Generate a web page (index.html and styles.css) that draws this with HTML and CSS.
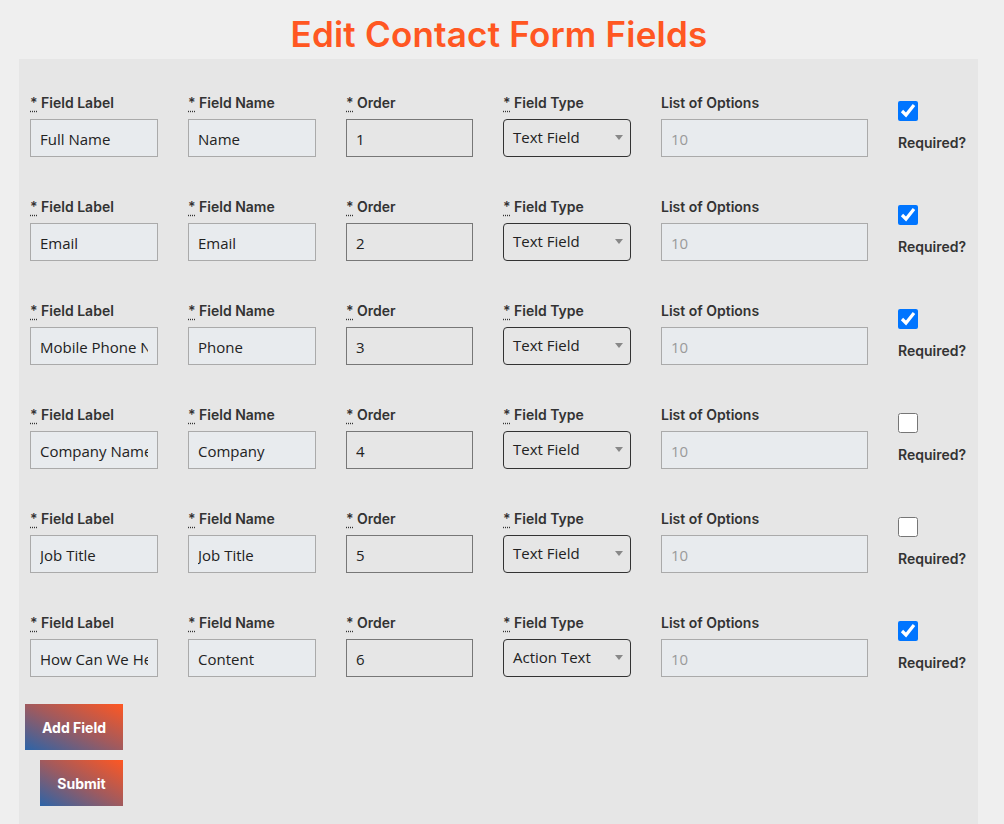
FILE: index.html
```html
<!DOCTYPE html>
<html>
<head>
  <meta charset="utf-8">
  <title>Edit Contact Form Fields</title>
  <link rel="stylesheet" href="styles.css">
</head>
<body>
  <h1>Edit Contact Form Fields</h1>

  <form class="fields" onSubmit="return false">
    <div class="row">
      <div class="col"><label><abbr title="required">*</abbr> Field Label</label><input class="txt" type="text" value="Full Name"></div>
      <div class="col"><label><abbr title="required">*</abbr> Field Name</label><input class="txt" type="text" value="Name"></div>
      <div class="col order"><label><abbr title="required">*</abbr> Order</label><input class="txt num" type="text" value="1"></div>
      <div class="col"><label><abbr title="required">*</abbr> Field Type</label><div class="select">Text Field</div></div>
      <div class="col wide"><label>List of Options</label><input class="txt" type="text" placeholder="10" disabled></div>
      <div class="req"><input type="checkbox" checked><label>Required?</label></div>
    </div>

    <div class="row">
      <div class="col"><label><abbr title="required">*</abbr> Field Label</label><input class="txt" type="text" value="Email"></div>
      <div class="col"><label><abbr title="required">*</abbr> Field Name</label><input class="txt" type="text" value="Email"></div>
      <div class="col order"><label><abbr title="required">*</abbr> Order</label><input class="txt num" type="text" value="2"></div>
      <div class="col"><label><abbr title="required">*</abbr> Field Type</label><div class="select">Text Field</div></div>
      <div class="col wide"><label>List of Options</label><input class="txt" type="text" placeholder="10" disabled></div>
      <div class="req"><input type="checkbox" checked><label>Required?</label></div>
    </div>

    <div class="row">
      <div class="col"><label><abbr title="required">*</abbr> Field Label</label><input class="txt" type="text" value="Mobile Phone Number"></div>
      <div class="col"><label><abbr title="required">*</abbr> Field Name</label><input class="txt" type="text" value="Phone"></div>
      <div class="col order"><label><abbr title="required">*</abbr> Order</label><input class="txt num" type="text" value="3"></div>
      <div class="col"><label><abbr title="required">*</abbr> Field Type</label><div class="select">Text Field</div></div>
      <div class="col wide"><label>List of Options</label><input class="txt" type="text" placeholder="10" disabled></div>
      <div class="req"><input type="checkbox" checked><label>Required?</label></div>
    </div>

    <div class="row">
      <div class="col"><label><abbr title="required">*</abbr> Field Label</label><input class="txt" type="text" value="Company Name"></div>
      <div class="col"><label><abbr title="required">*</abbr> Field Name</label><input class="txt" type="text" value="Company"></div>
      <div class="col order"><label><abbr title="required">*</abbr> Order</label><input class="txt num" type="text" value="4"></div>
      <div class="col"><label><abbr title="required">*</abbr> Field Type</label><div class="select">Text Field</div></div>
      <div class="col wide"><label>List of Options</label><input class="txt" type="text" placeholder="10" disabled></div>
      <div class="req"><input type="checkbox"><label>Required?</label></div>
    </div>

    <div class="row">
      <div class="col"><label><abbr title="required">*</abbr> Field Label</label><input class="txt" type="text" value="Job Title"></div>
      <div class="col"><label><abbr title="required">*</abbr> Field Name</label><input class="txt" type="text" value="Job Title"></div>
      <div class="col order"><label><abbr title="required">*</abbr> Order</label><input class="txt num" type="text" value="5"></div>
      <div class="col"><label><abbr title="required">*</abbr> Field Type</label><div class="select">Text Field</div></div>
      <div class="col wide"><label>List of Options</label><input class="txt" type="text" placeholder="10" disabled></div>
      <div class="req"><input type="checkbox"><label>Required?</label></div>
    </div>

    <div class="row">
      <div class="col"><label><abbr title="required">*</abbr> Field Label</label><input class="txt" type="text" value="How Can We Help You?"></div>
      <div class="col"><label><abbr title="required">*</abbr> Field Name</label><input class="txt" type="text" value="Content"></div>
      <div class="col order"><label><abbr title="required">*</abbr> Order</label><input class="txt num" type="text" value="6"></div>
      <div class="col"><label><abbr title="required">*</abbr> Field Type</label><div class="select">Action Text</div></div>
      <div class="col wide"><label>List of Options</label><input class="txt" type="text" placeholder="10" disabled></div>
      <div class="req"><input type="checkbox" checked><label>Required?</label></div>
    </div>

    <div class="actions">
      <button class="btn add" type="button">Add Field</button>
      <button class="btn submit" type="submit">Submit</button>
    </div>
  </form>
</body>
</html>
```

FILE: styles.css
```css
body {
  margin: 0;
  background: #efefef;
  font-family: "Open Sans", "Noto Sans", sans-serif;
  color: #333;
}

h1 {
  margin: 0 6px 0 0;
  height: 59px;
  padding-top: 12px;
  box-sizing: border-box;
  text-align: center;
  font-family: Inter, "Open Sans", sans-serif;
  font-size: 35px;
  font-weight: 600;
  line-height: 44px;
  color: #ff5722;
  letter-spacing: 0.2px;
}

.fields {
  margin-left: 19px;
  width: 959px;
  min-height: 765px;
  background: #e6e6e6;
  padding: 34px 11px 18px;
  box-sizing: border-box;
}

.row {
  display: flex;
  gap: 30px;
  margin-bottom: 40px;
}

.col {
  display: flex;
  flex-direction: column;
  width: 128px;
}

.col.order {
  width: 127px;
}

.col.wide {
  width: 207px;
}

.col label,
.req label {
  font-family: Inter, "Open Sans", sans-serif;
  font-size: 14px;
  font-weight: 600;
  line-height: 20px;
  color: #333;
  margin-bottom: 6px;
  white-space: nowrap;
}

.req label {
  margin-bottom: 0;
}

abbr {
  text-decoration: underline dotted;
  text-underline-offset: 3px;
}

.txt {
  height: 38px;
  box-sizing: border-box;
  border: 1px solid #aaa;
  background: #e8ebee;
  padding: 2px 9px 0;
  font-family: "Open Sans", sans-serif;
  font-size: 15px;
  color: #222;
}

.txt.num {
  background: #e6e6e6;
  border-color: #777;
}

.txt::placeholder {
  color: #9a9a9a;
}

.select {
  height: 38px;
  box-sizing: border-box;
  border: 1px solid #333;
  border-radius: 4px;
  padding: 0 9px;
  font-size: 15px;
  line-height: 34px;
  color: #222;
  position: relative;
}

.select::after {
  content: "";
  position: absolute;
  right: 7px;
  top: 15px;
  border-left: 4px solid transparent;
  border-right: 4px solid transparent;
  border-top: 5px solid #888;
}

.req {
  display: flex;
  flex-direction: column;
  align-items: flex-start;
}

.req input {
  width: 20px;
  height: 20px;
  margin: 8px 0 12px;
  accent-color: #0075ff;
}

.actions {
  margin-top: -13px;
}

.btn {
  display: block;
  height: 46px;
  border: 0;
  color: #fff;
  font-family: Inter, "Open Sans", sans-serif;
  font-size: 14px;
  font-weight: 700;
  background: linear-gradient(to top right, #2c64a8, #a05a5e 50%, #ff5722);
}

.btn.add {
  width: 98px;
  margin-left: -5px;
}

.btn.submit {
  width: 83px;
  margin: 10px 0 0 10px;
}
```
